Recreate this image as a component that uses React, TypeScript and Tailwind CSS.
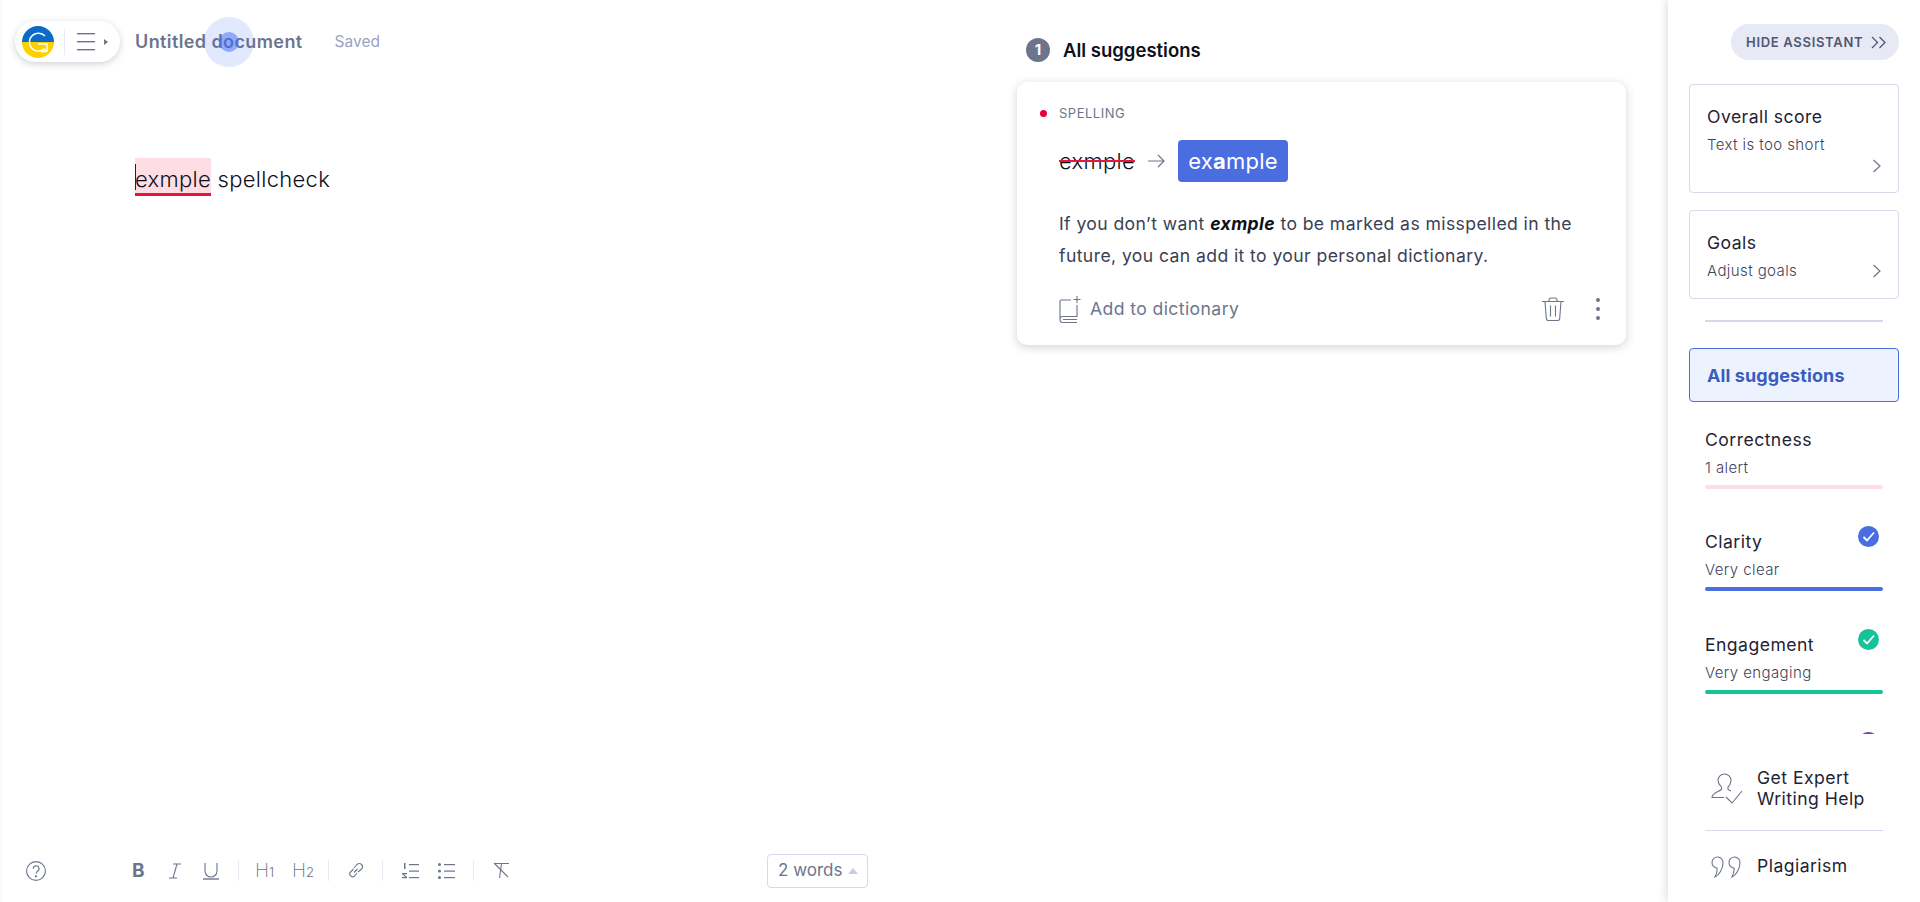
import React from "react";

const Chevron = () => (
  <svg width="10" height="16" viewBox="0 0 10 16" fill="none" stroke="#6d758d" strokeWidth="1.2"><path d="M1.5 2l6.5 6-6.5 6" /></svg>
);

const Check = ({ color }: { color: string }) => (
  <svg width="21" height="21" viewBox="0 0 21 21">
    <circle cx="10.5" cy="10.5" r="10.5" fill={color} />
    <path d="M5.5 11l3.5 3.5 7-8" fill="none" stroke="#fff" strokeWidth="1.8" />
  </svg>
);

const Logo = () => (
  <svg width="32" height="32" viewBox="0 0 32 32">
    <path d="M0 16a16 16 0 0 1 32 0z" fill="#0a6cc8" />
    <path d="M0 16a16 16 0 0 0 32 0z" fill="#fdd000" />
    <path d="M23 10A9 9 0 1 0 22 23.200L25 25.500M16 18h9v7.500M19 25.500h6" fill="none" stroke="#fff" strokeWidth="1.5" />
  </svg>
);

function Metric({ title, sub, bar, check, mb }: { title: string; sub: string; bar: string; check?: string; mb: string }) {
  return (
    <div className={`relative mx-[16px] ${mb}`}>
      <div className="text-[17.6px] leading-[24px] tracking-[0.45px] text-[#1f2333]">{title}</div>
      <div className="mt-[6px] text-[15px] font-light leading-[20px] tracking-[0.4px] text-[#3f4459]">{sub}</div>
      <div className="mt-[7px] h-[4px] rounded-[2px]" style={{ background: bar }} />
      {check && (
        <div className="absolute right-[4px] top-[-4px] flex">
          <Check color={check} />
        </div>
      )}
    </div>
  );
}

const Sep = () => <div className="h-[21px] w-px shrink-0 bg-[#e7e9f5]" />;

export default function App() {
  return (
    <div className="flex h-[902px] w-[1920px] overflow-hidden bg-white font-['Inter',sans-serif] shadow-[inset_5px_0_5px_-4px_rgba(0,0,0,0.04)]">
      <main className="relative flex w-[1016px] shrink-0 flex-col">
        <header className="flex items-center pl-[15px] pt-[21px]">
          <div className="flex h-[41px] w-[105px] items-center rounded-full bg-white pl-[7px] shadow-[0_2px_7px_rgba(40,50,90,0.22)]">
            <Logo />
            <div className="ml-[10px] h-[26px] w-px bg-[#e7e9f5]" />
            <svg className="ml-[12px]" width="31" height="20" viewBox="0 0 31 20" fill="#6d758d">
              <rect x="0" y="1" width="18" height="1.4" />
              <rect x="0" y="9" width="18" height="1.4" />
              <rect x="0" y="17" width="18" height="1.4" />
              <path d="M27 7l4 3-4 3z" />
            </svg>
          </div>
          <div className="ml-[15px] text-[18px] font-semibold leading-[24px] tracking-[0.4px] text-[#6d758d]">Untitled document</div>
          <div className="ml-[32px] text-[15.500px] leading-[24px] text-[#9aa2c0]">Saved</div>
        </header>

        <div className="absolute left-[204px] top-[17px] flex h-[50px] w-[50px] items-center justify-center rounded-full bg-[#3d6cf5]/15">
          <div className="h-[20px] w-[20px] rounded-full bg-[#3d6cf5]/50" />
        </div>

        <div className="mt-[96px] flex-1 pl-[135px] text-[22px] font-light leading-[30px] tracking-[0.3px] text-[#0e101a]">
          <span className="relative inline-block bg-[#fedde4] pt-[6px]">
            exmple
            <span className="absolute bottom-[-2px] left-0 h-[3px] w-full bg-[#e5173f]" />
            <span className="absolute left-0 top-[6px] h-[26px] w-px bg-[#1f2333]" />
          </span>{" "}
          spellcheck
        </div>

        <footer className="flex h-[62px] items-center pb-[1px] text-[#6d758d]">
          <svg className="ml-[26px]" width="20" height="20" viewBox="0 0 20 20" fill="none" stroke="#6d758d" strokeWidth="1.1">
            <circle cx="10" cy="10" r="9.4" />
            <path d="M7.200 7.800a2.900 2.900 0 1 1 4.400 2.400c-1 .7-1.600 1.200-1.600 2.600" />
            <circle cx="10" cy="15.300" r=".6" fill="#6d758d" />
          </svg>
          <div className="ml-[86px] w-[14px] text-[19px] font-bold leading-none">B</div>
          <svg className="ml-[23px]" width="12" height="16" viewBox="0 0 12 16" fill="none" stroke="#6d758d" strokeWidth="1.1">
            <path d="M4 1h8M0 15h8M8 1L4 15" />
          </svg>
          <svg className="ml-[22px]" width="16" height="18" viewBox="0 0 16 18" fill="none" stroke="#6d758d" strokeWidth="1.1">
            <path d="M2 1v8a6 6 0 0 0 12 0V1" />
            <path d="M0 17h16" strokeWidth="1.4" />
          </svg>
          <div className="ml-[19px]"><Sep /></div>
          <div className="ml-[16px] w-[18px] whitespace-nowrap text-[19px] font-extralight leading-none text-[#6d758d]">H<span className="text-[13px] font-light">1</span></div>
          <div className="ml-[19px] w-[20px] whitespace-nowrap text-[19px] font-extralight leading-none text-[#6d758d]">H<span className="text-[13px] font-light">2</span></div>
          <div className="ml-[16px]"><Sep /></div>
          <svg className="ml-[18px]" width="17" height="17" viewBox="0 0 17 17" fill="none" stroke="#6d758d" strokeWidth="1.1">
            <path d="M7 10.500l3.500-3.500M6.500 7L3 10.500a3 3 0 0 0 4 4L10 11M7 6l3-3.500a3 3 0 0 1 4.500 4.500L11 10" />
          </svg>
          <div className="ml-[18px]"><Sep /></div>
          <svg className="ml-[19px]" width="17" height="16" viewBox="0 0 17 16" fill="#6d758d">
            <rect x="7" y="1" width="10" height="1.2" />
            <rect x="7" y="7.500" width="10" height="1.2" />
            <rect x="7" y="14" width="10" height="1.2" />
            <rect x="2" y="0" width="1.500" height="6" />
            <path d="M0 10h5v1.200H2L5 14v1.200H0V14h3.200L0 11z" />
          </svg>
          <svg className="ml-[19px]" width="17" height="16" viewBox="0 0 17 16" fill="#6d758d">
            <rect x="6" y="1" width="11" height="1.2" />
            <rect x="6" y="7.500" width="11" height="1.2" />
            <rect x="6" y="14" width="11" height="1.2" />
            <circle cx="1.500" cy="1.600" r="1.500" />
            <circle cx="1.500" cy="8.100" r="1.500" />
            <circle cx="1.500" cy="14.600" r="1.500" />
          </svg>
          <div className="ml-[18px]"><Sep /></div>
          <svg className="ml-[19px]" width="17" height="17" viewBox="0 0 17 17" fill="none" stroke="#6d758d" strokeWidth="1.1">
            <path d="M1 1.500h15M8.500 1.500L6.500 16M1 1l14 14" />
          </svg>
          <div className="ml-[257px] flex h-[34px] w-[101px] items-center rounded-[4px] border border-[#d5d9ec] pl-[10px] pt-[1px] text-[17px] text-[#6d758d]">
            2 words
            <svg className="ml-[6px]" width="10" height="6" viewBox="0 0 10 6" fill="#c9cde2"><path d="M5 0l5 6H0z" /></svg>
          </div>
        </footer>
      </main>

      <section className="w-[611px] shrink-0 px-px">
        <div className="ml-[9px] mt-[38px] flex h-[24px] items-center">
          <div className="flex h-[24px] w-[24px] items-center justify-center rounded-full bg-[#6d758d] text-[15px] font-bold text-white">1</div>
          <div className="ml-[13px] pt-[1px] text-[18.500px] font-semibold text-[#0e101a]">All suggestions</div>
        </div>
        <div className="mt-[20px] h-[263px] rounded-[10px] bg-white pl-[42px] pr-[21px] shadow-[0_2px_10px_rgba(40,50,90,0.22)]">
          <div className="relative flex h-[58px] items-center pt-[5px] text-[13px] tracking-[0.5px] text-[#6d758d]">
            <span className="absolute left-[-19px] top-[28px] h-[7px] w-[7px] rounded-full bg-[#e5003c]" />
            SPELLING
          </div>
          <div className="flex h-[42px] items-center">
            <span className="relative text-[22px] font-light leading-[30px] tracking-[0.3px] text-[#0e101a]">
              exmple
              <span className="absolute left-0 top-[14px] h-[2px] w-full bg-[#e5173f]" />
            </span>
            <svg className="ml-[13px]" width="17" height="14" viewBox="0 0 17 14" fill="none" stroke="#6d758d" strokeWidth="1.2"><path d="M0 7h16M10 1l6 6-6 6" /></svg>
            <span className="ml-[13px] flex h-[42px] w-[110px] items-center justify-center rounded-[4px] bg-[#4a6ee0] text-[22px] tracking-[0.25px] text-white">
              ex<b className="font-bold">a</b>mple
            </span>
          </div>
          <p className="mt-[26px] text-[17.600px] leading-[32px] tracking-[0.4px] text-[#3b4054]">
            If you don’t want <b className="font-bold italic text-[#0e101a]">exmple</b> to be marked as misspelled in the
            <br />
            future, you can add it to your personal dictionary.
          </p>
          <div className="mt-[17px] flex h-[40px] items-center text-[#6d758d]">
            <svg width="22" height="27" viewBox="0 0 22 27" fill="none" stroke="#6d758d" strokeWidth="1.1">
              <path d="M12 4H2a1.500 1.500 0 0 0-1 1.500V24a2.500 2.500 0 0 0 2.500 2.500H18M1 23a2.500 2.500 0 0 1 2.500-2.500H18V9M4 23.500h14M18 0v7M14.500 3.500h7" />
            </svg>
            <span className="ml-[9px] text-[17.600px] tracking-[0.4px]">Add to dictionary</span>
            <svg className="ml-auto" width="22" height="24" viewBox="0 0 22 24" fill="none" stroke="#6d758d" strokeWidth="1.1">
              <path d="M0 4.500h22M3 4.500l1.300 17a2 2 0 0 0 2 2h9.400a2 2 0 0 0 2-2l1.300-17M7 4.500V3a2 2 0 0 1 2-2h4a2 2 0 0 1 2 2v1.500M8.500 8.500v11M13.500 8.500v11" />
            </svg>
            <div className="ml-[32px] mr-[5px] flex flex-col gap-[5px]">
              <span className="h-[4px] w-[4px] rounded-full bg-[#6d758d]" />
              <span className="h-[4px] w-[4px] rounded-full bg-[#6d758d]" />
              <span className="h-[4px] w-[4px] rounded-full bg-[#6d758d]" />
            </div>
          </div>
        </div>
      </section>

      <aside className="ml-[41px] flex h-[902px] w-[252px] shrink-0 flex-col bg-white shadow-[-2px_0_8px_rgba(40,50,90,0.15)]">
        <div className="h-[734px] overflow-hidden">
          <div className="flex justify-end pr-[21px] pt-[24px]">
            <div className="flex h-[36px] w-[168px] items-center rounded-full bg-[#e7e9f5] pl-[15px] pt-[1px] text-[13px] font-semibold tracking-[0.7px] text-[#4f5775]">
              HIDE ASSISTANT
              <svg className="ml-[8px]" width="16" height="13" viewBox="0 0 16 13" fill="none" stroke="#4f5775" strokeWidth="1.3"><path d="M1 1l5.500 5.500L1 12M8.500 1l5.500 5.500-5.500 5.500" /></svg>
            </div>
          </div>
          <div className="ml-[21px] mr-[21px] mt-[24px] h-[109px] rounded-[4px] border border-[#d5d9ec] pl-[17px] pr-[16px] pt-[20px]">
            <div className="text-[17.600px] leading-[24px] tracking-[0.45px] text-[#1f2333]">Overall score</div>
            <div className="mt-[6px] text-[15px] font-light leading-[20px] tracking-[0.4px] text-[#3f4459]">Text is too short</div>
            <div className="mt-[3px] flex justify-end"><Chevron /></div>
          </div>
          <div className="ml-[21px] mr-[21px] mt-[17px] h-[89px] rounded-[4px] border border-[#d5d9ec] pl-[17px] pr-[16px] pt-[20px]">
            <div className="text-[17.600px] leading-[24px] tracking-[0.45px] text-[#1f2333]">Goals</div>
            <div className="mt-[6px] flex items-center justify-between text-[15px] font-light leading-[20px] tracking-[0.4px] text-[#3f4459]">
              Adjust goals <Chevron />
            </div>
          </div>
          <div className="mx-[37px] mt-[21px] h-[2px] bg-[#d5d9ec]" />
          <div className="ml-[21px] mr-[21px] mt-[26px] flex h-[54px] items-center rounded-[4px] border border-[#4a6ee0] bg-[#edf3fe] pl-[17px] text-[18px] font-bold tracking-[0.1px] text-[#3c5bc0]">
            All suggestions
          </div>
          <div className="ml-[21px] mr-[21px] mt-[26px] flex flex-col">
            <Metric title="Correctness" sub="1 alert" bar="#fedde4" mb="mb-[41px]" />
            <Metric title="Clarity" sub="Very clear" bar="#4a6ee0" check="#4a6ee0" mb="mb-[42px]" />
            <Metric title="Engagement" sub="Very engaging" bar="#15c39a" check="#15c39a" mb="mb-[38px]" />
            <div className="relative mx-[16px] h-[40px]">
              <span className="absolute right-[4px] top-0 h-[21px] w-[21px] rounded-full bg-[#7a3fc0]" />
            </div>
          </div>
        </div>
        <div className="relative z-10 flex flex-1 flex-col bg-white pl-[37px] pr-[37px]">
          <div className="flex h-[96px] items-center pt-[12px]">
            <svg className="ml-[6px]" width="32" height="31" viewBox="0 0 32 31" fill="none" stroke="#6d758d" strokeWidth="1.1">
              <path d="M7 7.500a6.500 6.500 0 0 1 13 0c0 3-1.500 5-3 6.500v2.500l3 1.500M10.500 14c-1-1-3.500-3-3.500-6.500M10.500 14v2.500C7 19 1 20 1 24.500h12" />
              <path d="M15 24l6 6L31 18" />
            </svg>
            <div className="ml-[14px] text-[17.600px] leading-[21px] tracking-[0.45px] text-[#1f2333]">
              Get Expert
              <br />
              Writing Help
            </div>
          </div>
          <div className="h-px bg-[#d5d9ec]" />
          <div className="flex h-[71px] items-center">
            <svg className="ml-[6px]" width="30" height="22" viewBox="0 0 30 22" fill="none" stroke="#6d758d" strokeWidth="1.1">
              <path d="M12 6.500a5.500 5.500 0 1 0-6 5.500c.5 3-.5 6-2 9 4-2 8-8 8-14.500zM29 6.500a5.500 5.500 0 1 0-6 5.500c.5 3-.5 6-2 9 4-2 8-8 8-14.500z" />
            </svg>
            <div className="ml-[16px] text-[17.600px] tracking-[0.45px] text-[#1f2333]">Plagiarism</div>
          </div>
        </div>
      </aside>
    </div>
  );
}
